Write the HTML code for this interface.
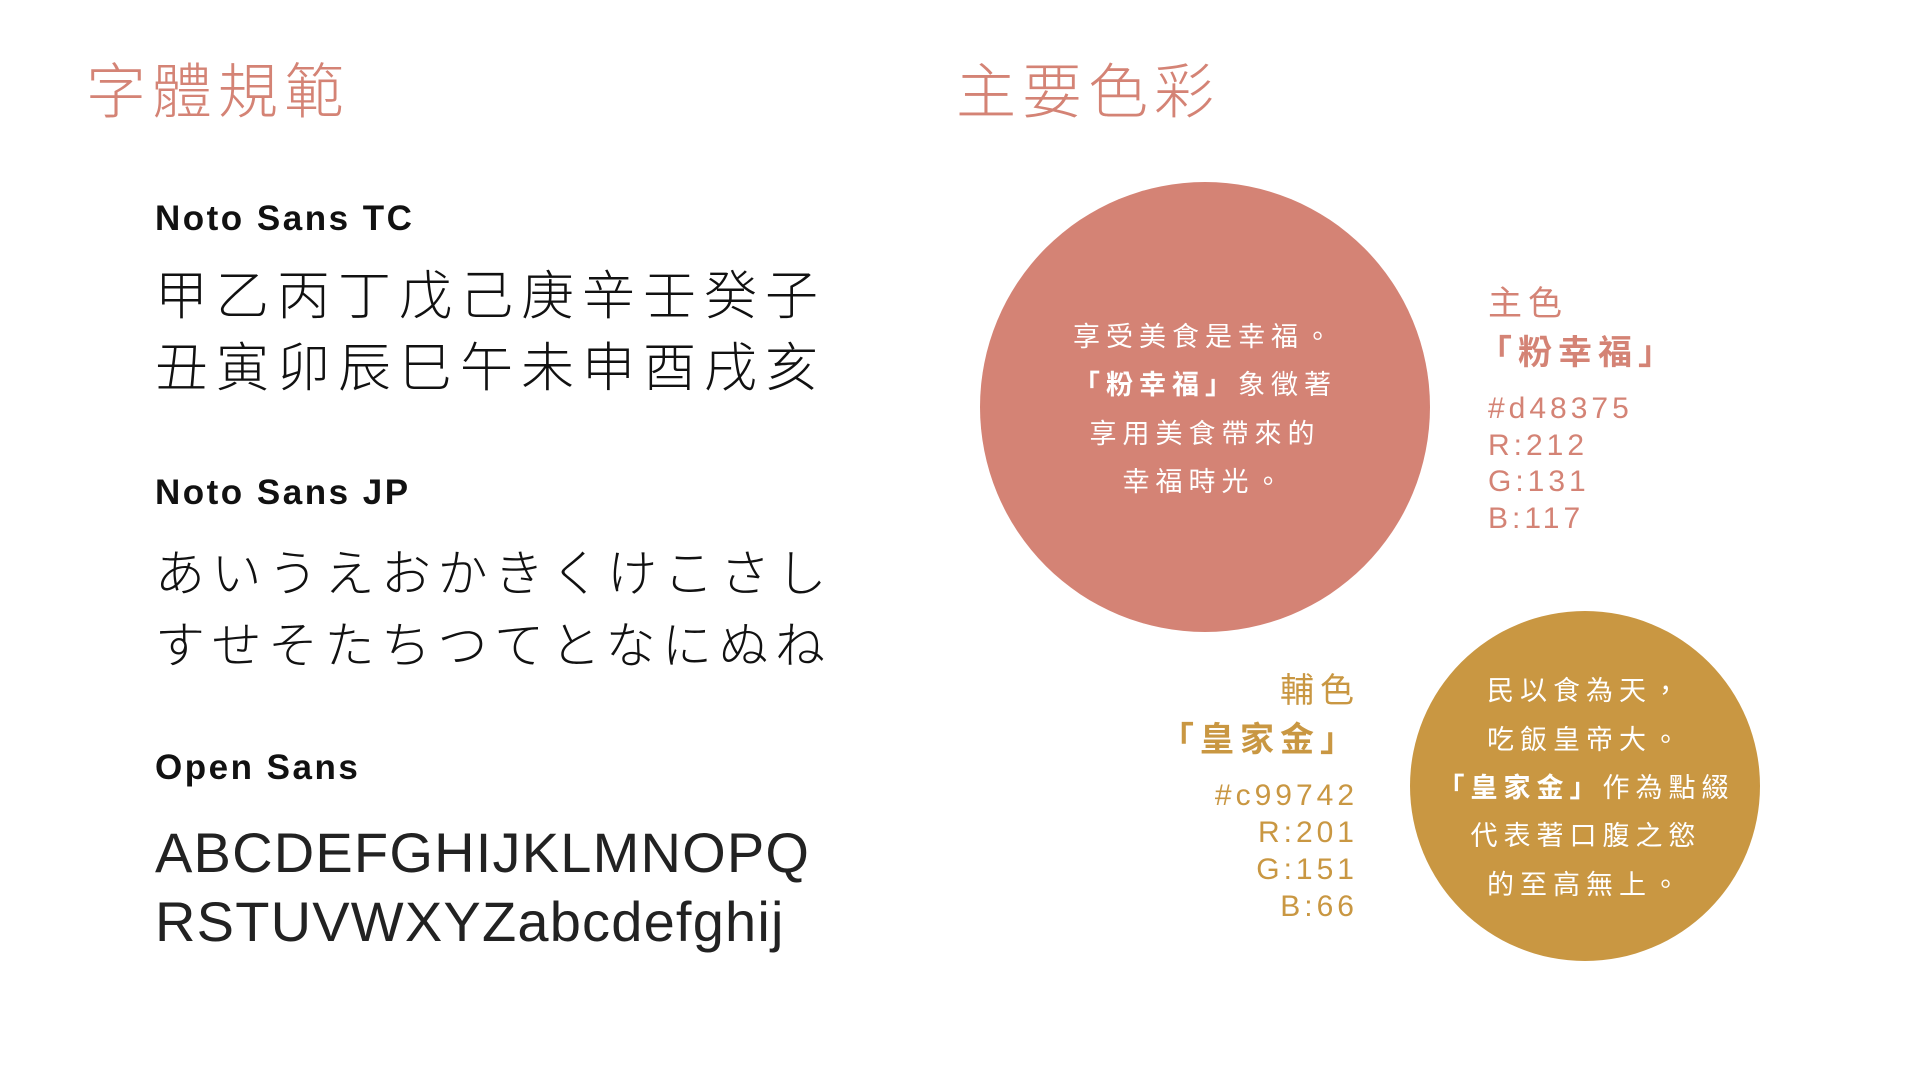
<!DOCTYPE html>
<html><head><meta charset="utf-8"><style>
body{margin:0;width:1920px;height:1080px;background:#fff;position:relative;overflow:hidden;font-family:"Liberation Sans","Noto Sans CJK TC",sans-serif;}
.a{position:absolute;white-space:nowrap;line-height:1;}
.h{font-size:60px;color:#d48375;letter-spacing:6px;font-weight:300;}
.lbl{font-size:35px;font-weight:bold;color:#111;letter-spacing:2.5px;}
.cjk{font-size:53px;color:#111;letter-spacing:8px;font-weight:300;}
.kana{font-size:50px;color:#111;letter-spacing:6.5px;font-weight:300;font-family:"Liberation Sans","Noto Sans CJK JP",sans-serif;}
.lat{font-size:56px;color:#222;letter-spacing:1.2px;}
.circ{position:absolute;border-radius:50%;}
.ct{position:absolute;color:#fff;font-size:27px;letter-spacing:6px;text-align:center;line-height:1;width:500px;}
.pk{color:#d48375}.gd{color:#c99742}
.s1{font-size:34px;letter-spacing:6px;}
.s2{font-size:34px;letter-spacing:6px;font-weight:bold;}
.s3{font-size:30px;letter-spacing:4px;}
</style></head><body>
<div class="a h" style="left:86px;top:63px">字體規範</div>
<div class="a h" style="left:956px;top:63px">主要色彩</div>
<div class="a lbl" style="left:155px;top:201px">Noto Sans TC</div>
<div class="a cjk" style="left:155px;top:270px">甲乙丙丁戊己庚辛壬癸子</div>
<div class="a cjk" style="left:155px;top:342px">丑寅卯辰巳午未申酉戌亥</div>
<div class="a lbl" style="left:155px;top:475px">Noto Sans JP</div>
<div class="a kana" style="left:155px;top:549px">あいうえおかきくけこさし</div>
<div class="a kana" style="left:155px;top:621px">すせそたちつてとなにぬね</div>
<div class="a lbl" style="left:155px;top:750px">Open Sans</div>
<div class="a lat" style="left:155px;top:825px">ABCDEFGHIJKLMNOPQ</div>
<div class="a lat" style="left:155px;top:894px">RSTUVWXYZabcdefghij</div>

<div class="circ" style="left:980px;top:182px;width:450px;height:450px;background:#d48375"></div>
<div class="ct" style="left:955px;top:324px">享受美食是幸福。</div>
<div class="ct" style="left:955px;top:372px"><b>「粉幸福」</b>象徵著</div>
<div class="ct" style="left:955px;top:421px">享用美食帶來的</div>
<div class="ct" style="left:955px;top:469px">幸福時光。</div>

<div class="a pk s1" style="left:1488px;top:287px">主色</div>
<div class="a pk s2" style="left:1478px;top:336px">「粉幸福」</div>
<div class="a pk s3" style="left:1488px;top:394px">#d48375</div>
<div class="a pk s3" style="left:1488px;top:431px">R:212</div>
<div class="a pk s3" style="left:1488px;top:467px">G:131</div>
<div class="a pk s3" style="left:1488px;top:504px">B:117</div>

<div class="circ" style="left:1410px;top:611px;width:350px;height:350px;background:#c99742"></div>
<div class="ct" style="left:1336px;top:678px">民以食為天，</div>
<div class="ct" style="left:1336px;top:727px">吃飯皇帝大。</div>
<div class="ct" style="left:1336px;top:775px"><b>「皇家金」</b>作為點綴</div>
<div class="ct" style="left:1336px;top:823px">代表著口腹之慾</div>
<div class="ct" style="left:1336px;top:872px">的至高無上。</div>

<div class="a gd s1" style="right:560px;top:674px;text-align:right">輔色</div>
<div class="a gd s2" style="right:560px;top:723px">「皇家金」</div>
<div class="a gd s3" style="right:562px;top:781px">#c99742</div>
<div class="a gd s3" style="right:562px;top:818px">R:201</div>
<div class="a gd s3" style="right:562px;top:855px">G:151</div>
<div class="a gd s3" style="right:562px;top:892px">B:66</div>
</body></html>
